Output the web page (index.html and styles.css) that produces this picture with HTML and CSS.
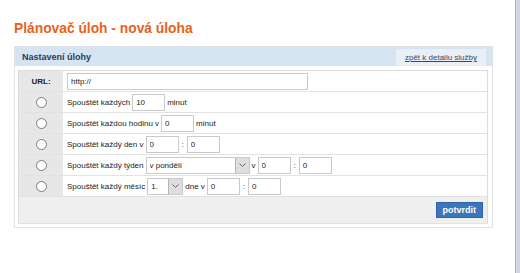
FILE: index.html
```html
<!DOCTYPE html>
<html lang="cs">
<head>
    <meta charset="UTF-8">
    <title>Plánovač úloh - nová úloha</title>
    <link rel="stylesheet" href="styles.css">
</head>
<body>
    <div class="page">
        <main class="content">
            <h1>Plánovač úloh - nová úloha</h1>
            <div class="panel">
                <div class="panel-head">
                    <span class="panel-title">Nastavení úlohy</span>
                    <span class="panel-link"><a href="#">zpět k detailu služby</a></span>
                </div>
                <div class="panel-body">
                    <table class="task-table">
                        <tr>
                            <th>URL:</th>
                            <td><div class="line"><input class="url" type="text" value="http://"></div></td>
                        </tr>
                        <tr>
                            <th><input type="radio" name="when"></th>
                            <td><div class="line">Spouštět každých <input class="num" type="text" value="10"> minut</div></td>
                        </tr>
                        <tr>
                            <th><input type="radio" name="when"></th>
                            <td><div class="line">Spouštět každou hodinu v <input class="num" type="text" value="0"> minut</div></td>
                        </tr>
                        <tr>
                            <th><input type="radio" name="when"></th>
                            <td><div class="line">Spouštět každý den v <input class="num" type="text" value="0"><span class="colon">:</span><input class="num" type="text" value="0"></div></td>
                        </tr>
                        <tr>
                            <th><input type="radio" name="when"></th>
                            <td>
                                <div class="line">Spouštět každý týden
                                    <span class="select day"><select><option>v pondělí</option></select><span class="arrow"><svg width="7" height="4" viewBox="0 0 7 4"><path d="M0.5 0.5 L3.5 3.5 L6.5 0.5" fill="none" stroke="#666" stroke-width="1"/></svg></span></span>
                                    v <input class="num" type="text" value="0"><span class="colon">:</span><input class="num" type="text" value="0">
                                </div>
                            </td>
                        </tr>
                        <tr>
                            <th><input type="radio" name="when"></th>
                            <td>
                                <div class="line">Spouštět každý měsíc
                                    <span class="select month"><select><option>1.</option></select><span class="arrow"><svg width="7" height="4" viewBox="0 0 7 4"><path d="M0.5 0.5 L3.5 3.5 L6.5 0.5" fill="none" stroke="#666" stroke-width="1"/></svg></span></span>
                                    dne v <input class="num" type="text" value="0"><span class="colon">:</span><input class="num" type="text" value="0">
                                </div>
                            </td>
                        </tr>
                        <tr class="foot">
                            <td colspan="2"><button type="submit">potvrdit</button></td>
                        </tr>
                    </table>
                </div>
            </div>
        </main>
        <div class="frame"></div>
    </div>
</body>
</html>
```

FILE: styles.css
```css
body {
    margin: 0;
    font-family: "Liberation Sans", Arial, sans-serif;
    font-size: 8px;
    color: #222;
    background: #fff;
}
.page {
    display: flex;
    height: 273px;
}
.content {
    flex: 1;
    padding: 20px 0 0 14px;
}
.frame {
    width: 5px;
    background: linear-gradient(to right, #aab5c3 0, #aab5c3 1px, #cfd8e3 1px);
}
h1 {
    margin: 0 0 9px;
    font-size: 13.8px;
    line-height: 17px;
    color: #e8621c;
}
.panel {
    width: 477px;
    border: 1px solid #dfe3e8;
}
.panel-head {
    height: 19px;
    background: #d6e4f1;
    display: flex;
    justify-content: space-between;
    align-items: flex-end;
    padding: 0 6px 0 7px;
}
.panel-title {
    align-self: center;
    font-size: 9px;
    font-weight: bold;
    color: #1c3c63;
}
.panel-link {
    height: 17px;
    width: 90px;
    display: flex;
    align-items: center;
    justify-content: center;
    background: #e8eff7;
}
.panel-link a {
    color: #3a4a5e;
    font-size: 8px;
}
.panel-body {
    padding: 4px 4px 3px 3px;
}
.task-table {
    width: 100%;
    border-collapse: collapse;
    border: 1px solid #dcdcdc;
}
.task-table th,
.task-table td {
    height: 20px;
    padding: 0;
    border-bottom: 1px solid #e2e2e2;
}
.task-table th {
    width: 44px;
    background: #e7e7e7;
    font-size: 8px;
    text-align: center;
}
.task-table td {
    padding-left: 4px;
}
.line {
    display: flex;
    align-items: center;
    gap: 2px;
    white-space: nowrap;
}
input[type="text"] {
    height: 17px;
    box-sizing: border-box;
    border: 1px solid #c9c9c9;
    padding: 0 3px;
    font-family: inherit;
    font-size: 8px;
    color: #222;
}
.url {
    width: 241px;
}
.num {
    width: 33px;
}
.colon {
    margin: 0 1px 0 1px;
}
input[type="radio"] {
    appearance: none;
    width: 11px;
    height: 11px;
    margin: 0;
    border: 1px solid #7a7a7a;
    border-radius: 50%;
    background: #fff;
    vertical-align: middle;
}
.select {
    display: inline-flex;
    height: 17px;
    box-sizing: border-box;
    border: 1px solid #c9c9c9;
}
.select select {
    appearance: none;
    border: 0;
    background: #fff;
    font-family: inherit;
    font-size: 8px;
    padding: 0 3px;
    flex: 1;
    color: #222;
}
.day {
    width: 104px;
}
.month {
    width: 36px;
}
.arrow {
    width: 13px;
    display: flex;
    align-items: center;
    justify-content: center;
    background: #dedede;
    border-left: 1px solid #b5b5b5;
}
.foot td {
    background: #efefef;
    text-align: right;
    padding: 3px 4px 3px 0;
}
.foot button {
    height: 16px;
    padding: 0 6px;
    border: 1px solid #2f65a3;
    background: #3a76ba;
    color: #fff;
    font-family: inherit;
    font-size: 9px;
    font-weight: bold;
}
```
